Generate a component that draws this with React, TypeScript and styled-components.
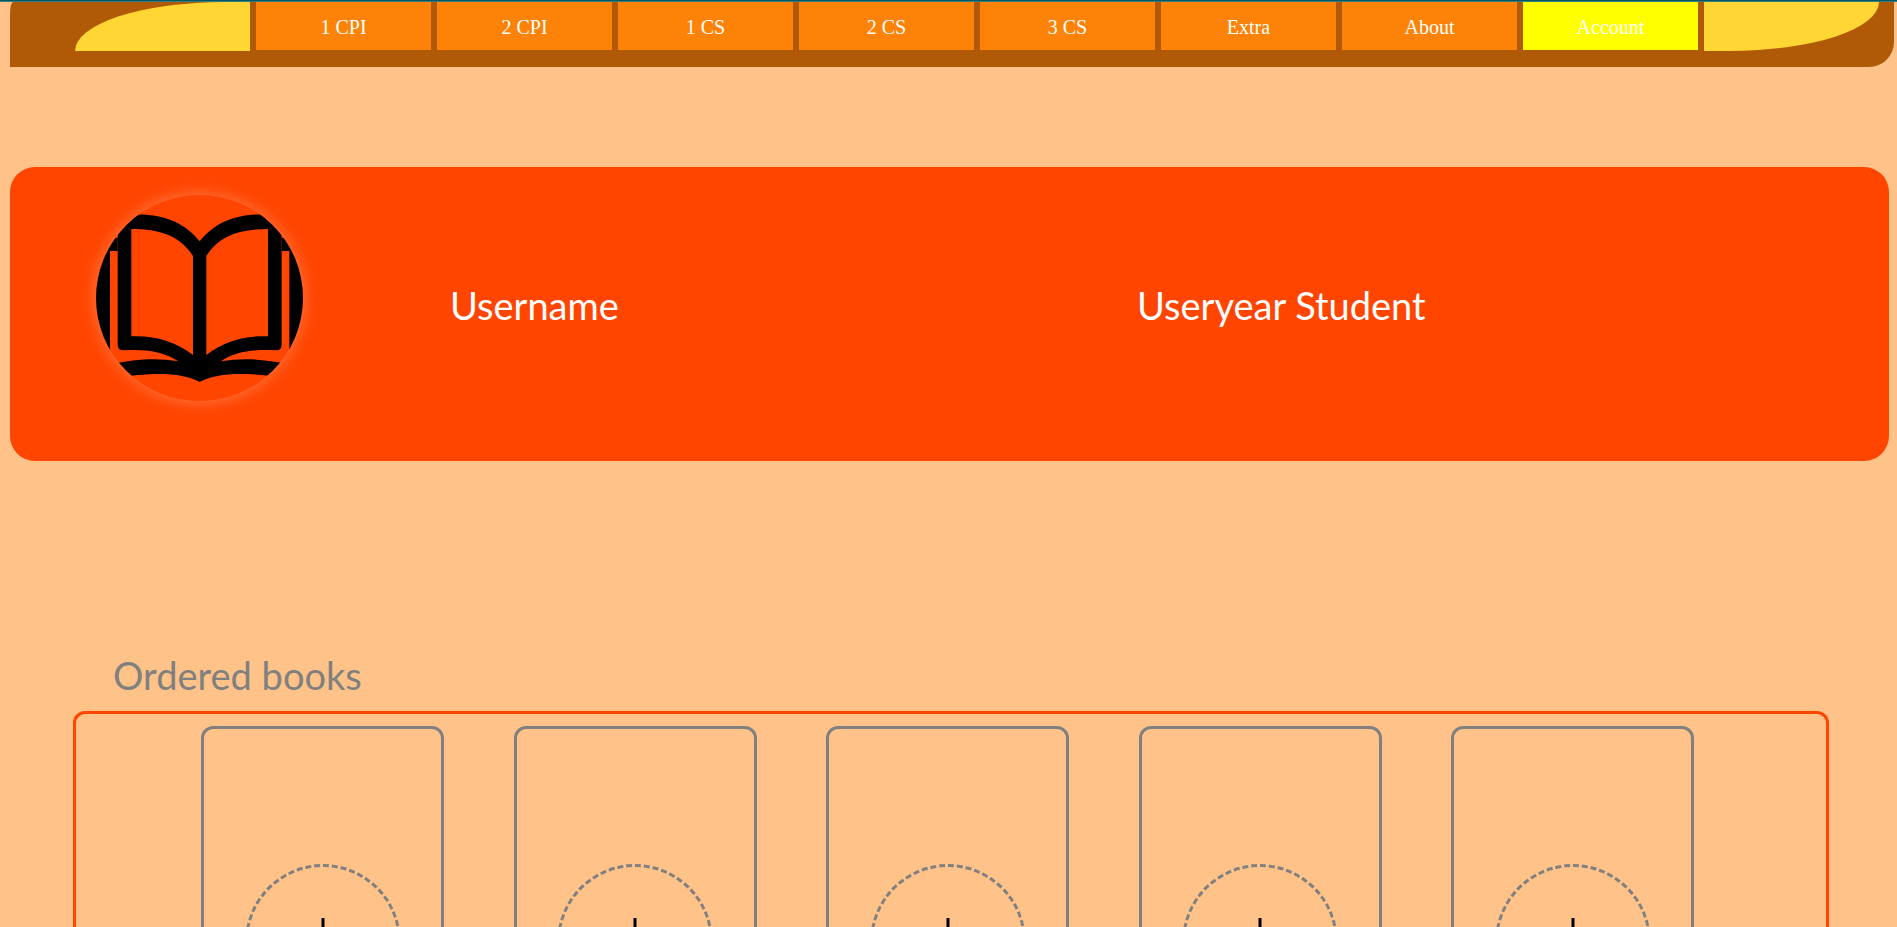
import React from "react";
import styled, { createGlobalStyle } from "styled-components";

const GlobalStyle = createGlobalStyle`
  *, *::before, *::after { box-sizing: border-box; }
  body {
    margin: 0;
    background: #ffc288;
    font-family: "Liberation Serif", "Times New Roman", serif;
  }
`;

const Page = styled.div`
  border-top: 1px solid #0b5560;
`;

const TopLine = styled.div`
  height: 1px;
  background: #2b7f86;
`;

const NavBar = styled.nav`
  display: flex;
  gap: 6px;
  height: 65px;
  margin: 0 3px 0 10px;
  padding: 0 15px 16px 65px;
  background: #b05a08;
  border-radius: 3px 0 25px 0 / 12px 0 25px 0;
`;

const NavCap = styled.span<{ $side: "left" | "right" }>`
  flex: 1;
  background: #ffd633;
  border-radius: ${(p) =>
    p.$side === "left" ? "150px 0 0 0 / 49px 0 0 0" : "0 0 150px 0 / 0 0 49px 0"};
`;

const NavLink = styled.a<{ $active?: boolean }>`
  flex: 1;
  height: 48px;
  line-height: 50px;
  text-align: center;
  font-size: 20px;
  color: #fff;
  text-decoration: none;
  background: ${(p) => (p.$active ? "#ffff00" : "#fc8307")};
`;

const Profile = styled.section`
  display: grid;
  grid-template-columns: 440fr 687fr 752fr;
  margin: 100px 8px 0 10px;
  padding: 28px 0 60px;
  border-radius: 25px;
  background: #ff4500;
`;

const Avatar = styled.div`
  width: 207px;
  height: 206px;
  margin-left: 86px;
  border-radius: 50%;
  overflow: hidden;
  box-shadow: 0 0 16px rgba(255, 255, 255, 0.3);

  svg { display: block; width: 100%; height: 100%; }
`;

const sans = `"Gill Sans", "Gill Sans MT", Lato, sans-serif`;

const ProfileText = styled.p`
  margin: 86px 0 0;
  font-family: ${sans};
  font-size: 38px;
  line-height: 48px;
  color: #fff;
`;

const Orders = styled.section`
  margin: 190px 68px 0 73px;
`;

const OrdersTitle = styled.h2`
  margin: 0 0 12px;
  padding-left: 40px;
  font-family: ${sans};
  font-size: 38px;
  font-weight: 400;
  line-height: 48px;
  color: #808080;
`;

const Shelf = styled.div`
  display: flex;
  justify-content: space-between;
  padding: 12px 132px 12px 125px;
  border: 3px solid #ff4500;
  border-radius: 12px;
`;

const Slot = styled.div`
  display: flex;
  flex: 0 1 243px;
  align-items: center;
  justify-content: center;
  height: 432px;
  border: 3px solid #808080;
  border-radius: 12px;
`;

const AddButton = styled.button`
  display: flex;
  align-items: center;
  justify-content: center;
  width: 156px;
  height: 156px;
  padding: 0;
  border: 3px dashed #808080;
  border-radius: 50%;
  background: transparent;
`;

const BookHalf = () => (
  <>
    <path d="M90 232H173V272H150V640H90Z" />
    <path
      fillRule="evenodd"
      d="M173 150L214 163C310 158 375 188 419 243H421V664H419C360 636 290 634 150 654V612C230 596 290 592 355 603C310 572 250 566 190 570Q173 570 173 553ZM214 206C300 206 360 226 399 287V584C345 543 285 525 214 528Z"
    />
  </>
);

const BookIcon = () => (
  <svg viewBox="108 104 621 618" preserveAspectRatio="none" role="img" aria-label="Open book">
    <BookHalf />
    <g transform="translate(838 0) scale(-1 1)">
      <BookHalf />
    </g>
  </svg>
);

const PlusIcon = () => (
  <svg width="48" height="48" viewBox="0 0 48 48" aria-hidden="true">
    <path d="M24 0V48M0 24H48" stroke="#000" strokeWidth="3" />
  </svg>
);

const links = ["1 CPI", "2 CPI", "1 CS", "2 CS", "3 CS", "Extra", "About", "Account"];
const slots = [1, 2, 3, 4, 5];

export default function App() {
  return (
    <Page>
      <GlobalStyle />
      <TopLine />
      <NavBar>
        <NavCap $side="left" />
        {links.map((label) => (
          <NavLink key={label} href="#" $active={label === "Account"}>
            {label}
          </NavLink>
        ))}
        <NavCap $side="right" />
      </NavBar>
      <main>
        <Profile>
          <Avatar>
            <BookIcon />
          </Avatar>
          <ProfileText>Username</ProfileText>
          <ProfileText>Useryear Student</ProfileText>
        </Profile>
        <Orders>
          <OrdersTitle>Ordered books</OrdersTitle>
          <Shelf>
            {slots.map((n) => (
              <Slot key={n}>
                <AddButton type="button" aria-label={`Add book ${n}`}>
                  <PlusIcon />
                </AddButton>
              </Slot>
            ))}
          </Shelf>
        </Orders>
      </main>
    </Page>
  );
}
